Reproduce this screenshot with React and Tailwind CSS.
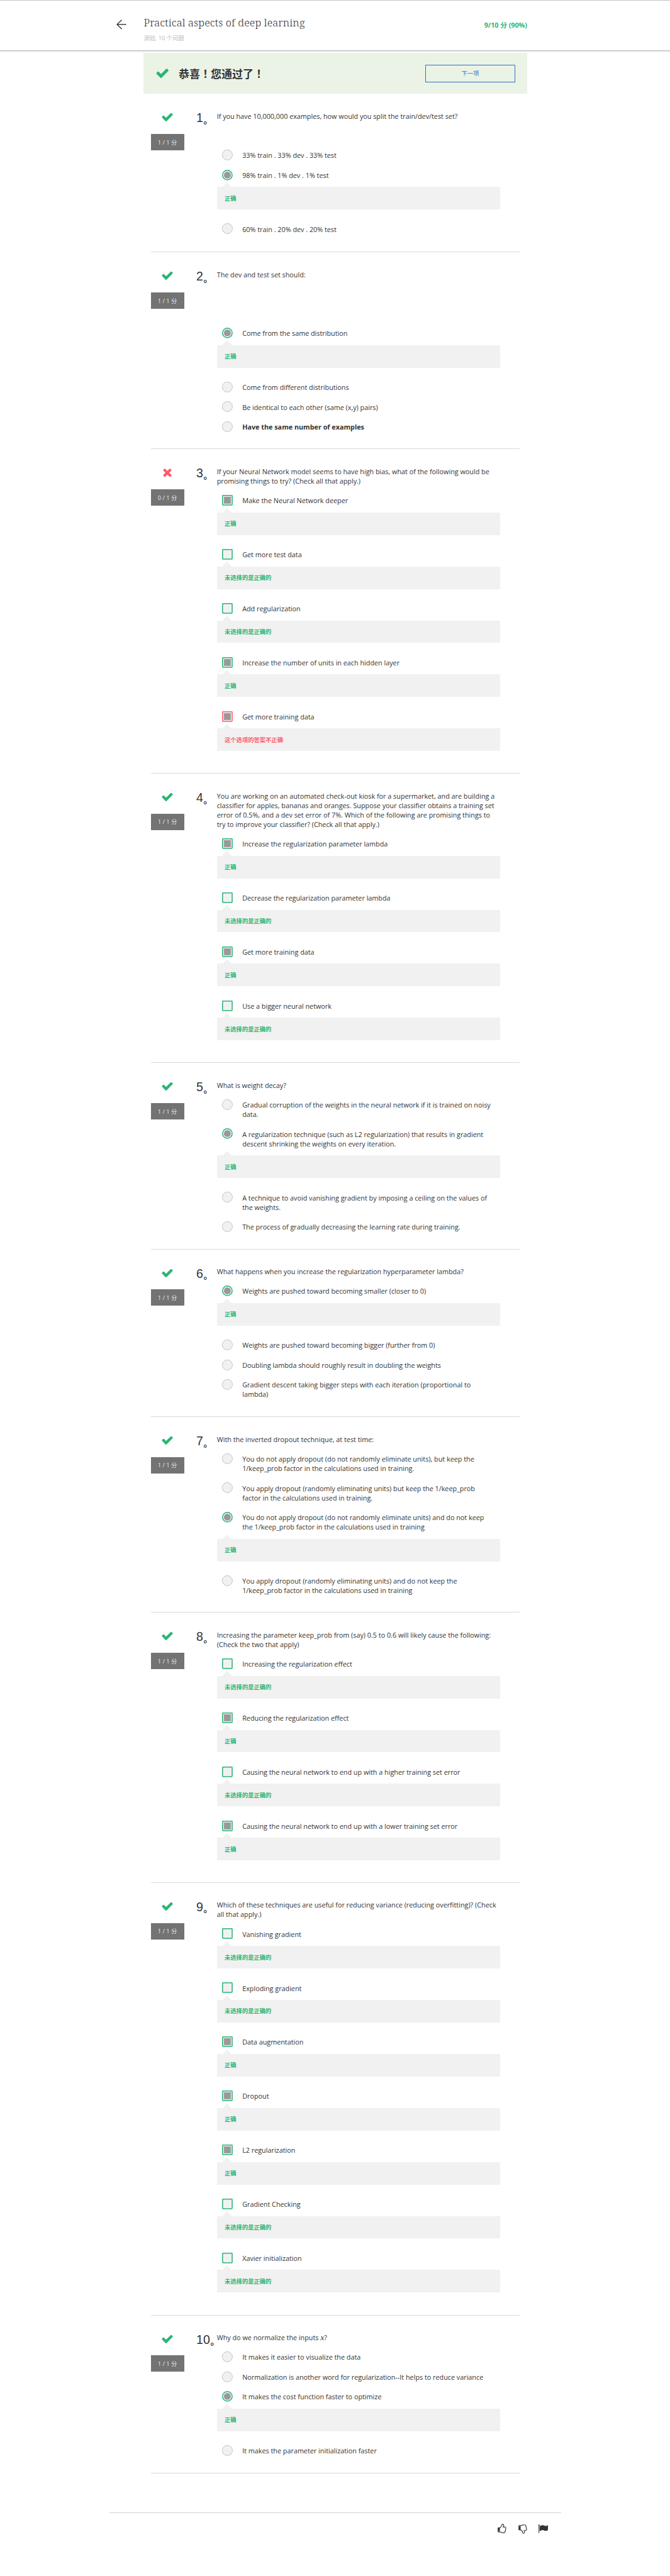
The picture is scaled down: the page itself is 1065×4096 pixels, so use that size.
const GREEN = "#2ab574";
const RED = "#ff5c6c";

const CHECK =
  "M1671 566q0 40-28 68l-724 724-136 136q-28 28-68 28t-68-28l-136-136-362-362q-28-28-28-68t28-68l136-136q28-28 68-28t68 28l294 295 656-657q28-28 68-28t68 28l136 136q28 28 28 68z";
const TIMES =
  "M1490 1322q0 40-28 68l-136 136q-28 28-68 28t-68-28l-294-294-294 294q-28 28-68 28t-68-28l-136-136q-28-28-28-68t28-68l294-294-294-294q-28-28-28-68t28-68l136-136q28-28 68-28t68 28l294 294 294-294q28-28 68-28t68 28l136 136q28 28 28 68t-28 68l-294 294 294 294q28 28 28 68z";
const THUMB =
  "M384 1344q0-26-19-45t-45-19-45 19-19 45 19 45 45 19 45-19 19-45zm1152-576q0-51-39-89.5t-89-38.5h-352q0-58 48-159.5t48-160.5q0-98-32-145t-128-47q-26 26-38 85t-30.5 125.5-59.5 109.5q-22 23-77 91-4 5-23 30t-31.5 41-34.5 42.5-40 44-38.5 35.5-40 27-35.5 9h-32v640h32q13 0 31.5 3t33 6.5 38 11 35 11.5 35.5 12.5 29 10.5q211 73 342 73h121q192 0 192-167 0-26-5-56 30-16 47.5-52.5t17.5-73.5-18-69q53-50 53-119 0-25-10-55.5t-25-47.5q32-1 53.5-47t21.5-81zm128-1q0 89-49 163 9 33 9 69 0 77-38 144 3 21 3 43 0 101-60 178 1 139-85 219.5t-227 80.5h-129q-96 0-189.5-22.5t-216.5-65.5q-116-40-138-40h-288q-53 0-90.5-37.5t-37.5-90.5v-640q0-53 37.5-90.5t90.5-37.5h274q36-24 137-155 58-75 107-128 24-25 35.5-85.5t30.5-126.5 62-108q39-37 90-37 84 0 151 32.5t102 101.5 35 186q0 93-48 192h176q104 0 180 76t76 179z";
const FLAG =
  "M320 256q0 72-64 110v1266q0 13-9.5 22.5t-22.5 9.5h-64q-13 0-22.5-9.5t-9.5-22.5v-1266q-64-38-64-110 0-53 37.5-90.5t90.5-37.5 90.5 37.5 37.5 90.5zm1472 64v763q0 25-12.5 38.5t-39.5 27.5q-215 116-369 116-61 0-123.5-22t-108.5-48-115.5-48-142.5-22q-192 0-464 146-17 9-33 9-26 0-45-19t-19-45v-742q0-32 31-55 21-14 79-43 236-120 421-120 107 0 200 29t219 88q38 19 88 19 54 0 117.5-21t110-47 88-47 54.5-21q26 0 45 19t19 45z";

const Glyph = ({ d, className, fill = "#333333" }) => (
  <svg viewBox="0 0 1792 1792" className={className} fill={fill} aria-hidden="true">
    <path d={d} />
  </svg>
);

// Feedback kinds for an answer option
const OK = { text: "正确", color: "text-[#2ab574]" };
const UNPICKED = { text: "未选择的是正确的", color: "text-[#2ab574]" };
const WRONG = { text: "这个选项的答案不正确", color: "text-[#ff5c6c]" };

const QUESTIONS = [
  {
    height: "h-[252px]",
    gap: "mt-[38.7px]",
    text: "If you have 10,000,000 examples, how would you split the train/dev/test set?",
    options: [
      { t: "33% train . 33% dev . 33% test" },
      { t: "98% train . 1% dev . 1% test", on: true, fb: OK },
      { t: "60% train . 20% dev . 20% test" },
    ],
  },
  {
    height: "h-[313.1px]",
    gap: "mt-[69.6px]",
    text: "The dev and test set should:",
    options: [
      { t: "Come from the same distribution", on: true, fb: OK },
      { t: "Come from different distributions" },
      { t: "Be identical to each other (same (x,y) pairs)" },
      { t: "Have the same number of examples", bold: true },
    ],
  },
  {
    height: "h-[515.7px]",
    wrong: true,
    multi: true,
    text: "If your Neural Network model seems to have high bias, what of the following would be\npromising things to try? (Check all that apply.)",
    options: [
      { t: "Make the Neural Network deeper", on: true, fb: OK },
      { t: "Get more test data", fb: UNPICKED },
      { t: "Add regularization", fb: UNPICKED },
      { t: "Increase the number of units in each hidden layer", on: true, fb: OK },
      { t: "Get more training data", on: true, fb: WRONG },
    ],
  },
  {
    height: "h-[460.1px]",
    multi: true,
    text: "You are working on an automated check-out kiosk for a supermarket, and are building a\nclassifier for apples, bananas and oranges. Suppose your classifier obtains a training set\nerror of 0.5%, and a dev set error of 7%. Which of the following are promising things to\ntry to improve your classifier? (Check all that apply.)",
    options: [
      { t: "Increase the regularization parameter lambda", on: true, fb: OK },
      { t: "Decrease the regularization parameter lambda", fb: UNPICKED },
      { t: "Get more training data", on: true, fb: OK },
      { t: "Use a bigger neural network", fb: UNPICKED },
    ],
  },
  {
    height: "h-[296.3px]",
    text: "What is weight decay?",
    options: [
      { t: "Gradual corruption of the weights in the neural network if it is trained on noisy\ndata." },
      {
        t: "A regularization technique (such as L2 regularization) that results in gradient\ndescent shrinking the weights on every iteration.",
        on: true,
        fb: OK,
      },
      { t: "A technique to avoid vanishing gradient by imposing a ceiling on the values of\nthe weights." },
      { t: "The process of gradually decreasing the learning rate during training." },
    ],
  },
  {
    height: "h-[266.7px]",
    text: "What happens when you increase the regularization hyperparameter lambda?",
    options: [
      { t: "Weights are pushed toward becoming smaller (closer to 0)", on: true, fb: OK },
      { t: "Weights are pushed toward becoming bigger (further from 0)" },
      { t: "Doubling lambda should roughly result in doubling the weights" },
      { t: "Gradient descent taking bigger steps with each iteration (proportional to\nlambda)" },
    ],
  },
  {
    height: "h-[311.1px]",
    text: "With the inverted dropout technique, at test time:",
    options: [
      { t: "You do not apply dropout (do not randomly eliminate units), but keep the\n1/keep_prob factor in the calculations used in training." },
      { t: "You apply dropout (randomly eliminating units) but keep the 1/keep_prob\nfactor in the calculations used in training." },
      {
        t: "You do not apply dropout (do not randomly eliminate units) and do not keep\nthe 1/keep_prob factor in the calculations used in training",
        on: true,
        fb: OK,
      },
      { t: "You apply dropout (randomly eliminating units) and do not keep the\n1/keep_prob factor in the calculations used in training" },
    ],
  },
  {
    height: "h-[429.5px]",
    multi: true,
    text: "Increasing the parameter keep_prob from (say) 0.5 to 0.6 will likely cause the following:\n(Check the two that apply)",
    options: [
      { t: "Increasing the regularization effect", fb: UNPICKED },
      { t: "Reducing the regularization effect", on: true, fb: OK },
      { t: "Causing the neural network to end up with a higher training set error", fb: UNPICKED },
      { t: "Causing the neural network to end up with a lower training set error", on: true, fb: OK },
    ],
  },
  {
    height: "h-[687.7px]",
    multi: true,
    text: "Which of these techniques are useful for reducing variance (reducing overfitting)? (Check\nall that apply.)",
    options: [
      { t: "Vanishing gradient", fb: UNPICKED },
      { t: "Exploding gradient", fb: UNPICKED },
      { t: "Data augmentation", on: true, fb: OK },
      { t: "Dropout", on: true, fb: OK },
      { t: "L2 regularization", on: true, fb: OK },
      { t: "Gradient Checking", fb: UNPICKED },
      { t: "Xavier initialization", fb: UNPICKED },
    ],
  },
  {
    height: "h-[251.9px]",
    text: (
      <>
        Why do we normalize the inputs{" "}
        <i className="font-['Liberation_Serif',serif] text-[13.5px] leading-none">x</i>?
      </>
    ),
    options: [
      { t: "It makes it easier to visualize the data" },
      { t: "Normalization is another word for regularization--It helps to reduce variance" },
      { t: "It makes the cost function faster to optimize", on: true, fb: OK },
      { t: "It makes the parameter initialization faster" },
    ],
  },
];

function Marker({ multi, on, fb }) {
  const edge = fb === WRONG ? RED : GREEN;
  const lit = on || fb;
  return (
    <svg viewBox="0 0 24 24" className="size-[16.8px] shrink-0 overflow-visible" aria-hidden="true">
      {multi ? (
        <>
          <rect x="1.1" y="1.1" width="21.8" height="21.8" rx="1" fill="#f1f1f1" stroke={edge} strokeWidth="2.2" />
          {on && <rect x="4.2" y="4.2" width="15.6" height="15.6" fill="#999999" />}
        </>
      ) : (
        <>
          <circle cx="12" cy="12" r={lit ? 11 : 11.5} fill="#f1f1f1" stroke={lit ? edge : "#aeaeae"} strokeWidth={lit ? 2.1 : 1} />
          {on && <circle cx="12" cy="12" r="7.8" fill="#999999" />}
        </>
      )}
    </svg>
  );
}

function Option({ o, multi }) {
  return (
    <li>
      <div className="flex pb-[8.2px] pt-[8.27px] pl-[7.9px]">
        <div className="flex h-[15.1px] items-center">
          <Marker multi={multi} on={o.on} fb={o.fb} />
        </div>
        <p className={o.bold ? "ml-[15.8px] mt-[0.4px] -mb-[0.4px] whitespace-pre font-bold" : "ml-[15.8px] mt-[0.4px] -mb-[0.4px] whitespace-pre"}>{o.t}</p>
      </div>
      {o.fb && (
        <div className="relative mb-[14.85px] mt-[3.6px] flex h-[35.9px] items-center bg-[#f1f1f1] pl-[12.3px]">
          <svg viewBox="0 0 28 14" className="absolute -top-[7.3px] left-[8.4px] h-[8px] w-[15.6px]" aria-hidden="true">
            <path d="M0 14L14 0L28 14Z" fill="#f1f1f1" />
          </svg>
          <span className={"text-[9.3px] font-bold " + o.fb.color}>{o.fb.text}</span>
        </div>
      )}
    </li>
  );
}

function Question({ q, n }) {
  return (
    <section className={"flex shrink-0 flex-col justify-between " + q.height}>
      <div className="flex">
        <div className="flex w-[53px] shrink-0 flex-col items-center">
          <Glyph d={q.wrong ? TIMES : CHECK} fill={q.wrong ? RED : GREEN} className="mt-[27px] size-[20px]" />
          <div className="mt-[16.9px] flex h-[25.8px] w-full items-center justify-center bg-[#737373] text-[9.35px] text-[#e6e6e6]">
            {q.wrong ? "0 / 1 分" : "1 / 1 分"}
          </div>
        </div>
        <div className="mt-[28px] w-[52.2px] shrink-0 whitespace-nowrap pl-[19.6px] font-['Liberation_Sans','Noto_Sans_CJK_SC',sans-serif] text-[19.6px] leading-[20px]">
          {n}
          <span className="relative top-[1.6px] ml-[0.6px] text-[14px] font-bold leading-none [font-feature-settings:'halt']">。</span>
        </div>
        <div className="w-[450.3px] pt-[27.4px]">
          <p className="whitespace-pre">{q.text}</p>
          <ul className={q.gap || "mt-[7.65px]"}>
            {q.options.map((o) => (
              <Option key={o.t} o={o} multi={q.multi} />
            ))}
          </ul>
        </div>
      </div>
      <div className="h-px w-full shrink-0 bg-[#d8d8d8]" />
    </section>
  );
}

export default function App() {
  return (
    <div className="flex h-[4096px] w-[1065px] flex-col overflow-hidden bg-white font-['Open_Sans','Noto_Sans_CJK_SC',sans-serif] text-[10.8px] leading-[15.1px] text-[#333333]">
      <header className="flex h-[81px] shrink-0 border-b border-t border-b-[#bdbdbd] border-t-[#c4c4c4] pl-[185.4px] pr-[227.2px] shadow-[0_1px_1px_rgba(0,0,0,0.12)]">
        <svg viewBox="55 154 80 78" className="mt-[30px] h-[15.6px] w-[16px]" fill="none" stroke="#1f1f1f" strokeWidth="5.8" strokeLinecap="round" strokeLinejoin="round" aria-hidden="true">
          <path d="M96 159L59.500 193.500L96 228M60 193.500H131" />
        </svg>
        <div className="ml-[27px] pt-[24px]">
          <h1 className="whitespace-nowrap font-['Noto_Serif','DejaVu_Serif',serif] text-[16.4px] font-light leading-[22px] tracking-[0.17px]">Practical aspects of deep learning</h1>
          <p className="mt-[6.2px] text-[9.3px] text-[#bbbbbb]">测验, 10 个问题</p>
        </div>
        <p className="ml-auto mt-[32.2px] text-[10.7px] font-bold text-[#2ab574]">9/10 分 (90%)</p>
      </header>

      <div className="ml-[228px] mt-[3px] flex h-[65px] w-[610px] shrink-0 items-center bg-[#ebf3e6] pl-[18.7px] pr-[19px]">
        <Glyph d={CHECK} fill={GREEN} className="size-[22.4px]" />
        <h2 className="ml-[14.8px] mt-[2px] text-[17.05px] font-bold leading-[24px]">
          恭喜<span className="font-['Noto_Sans_CJK_TC']">！</span>您通过了<span className="font-['Noto_Sans_CJK_TC']">！</span>
        </h2>
        <button className="ml-auto flex h-[28px] w-[143px] items-center justify-center border border-[#2a73cc] text-[9.3px] text-[#2a73cc]">下一项</button>
      </div>

      <main className="ml-[239.5px] flex w-[586.7px] shrink-0 flex-col pt-[0.4px]">
        {QUESTIONS.map((q, i) => (
          <Question key={i} q={q} n={i + 1} />
        ))}
      </main>

      <footer className="ml-[174px] mt-[61.7px] flex w-[718px] shrink-0 items-start border-t border-[#cfcfcf] pl-[616.4px] pt-[16.6px]">
        <Glyph d={THUMB} className="size-[15.8px]" />
        <Glyph d={THUMB} className="ml-[16.500px] size-[15.8px] -scale-y-100" />
        <Glyph d={FLAG} className="ml-[16.900px] size-[16px]" />
      </footer>
    </div>
  );
}
